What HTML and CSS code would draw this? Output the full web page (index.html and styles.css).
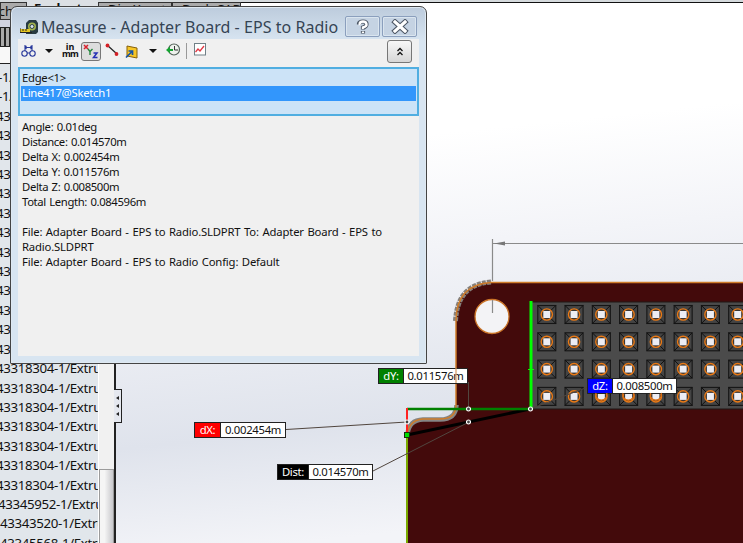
FILE: index.html
```html
<!DOCTYPE html>
<html lang="en">
<head>
<meta charset="utf-8">
<title>Measure - Adapter Board - EPS to Radio</title>
<link rel="stylesheet" href="styles.css">
</head>
<body>
<div class="desktop">
  <div class="tabs"><span class="tab first">Sketch</span><span class="tab active">Evaluate</span><span class="tab dim">DimXpert</span><span class="tab pcb">Dock CAD</span></div>
  <div class="workspace">
    <aside class="sidebar">
      <div class="tree-tools"><i></i><i></i></div>
      <div class="tree-body">
        <ul class="tree" id="tree"></ul>
        <div class="scroll"><div class="thumb"></div></div>
      </div>
    </aside>
    <main class="viewport"></main>
  </div>
  <svg class="model" width="743" height="543" viewBox="0 0 743 543">
    <defs>
      <g id="pin">
        <rect x="-9" y="-9" width="18" height="18" fill="#444" stroke="#151515" stroke-width="1.1"/>
        <path d="M-9-9 9 9M9-9-9 9" stroke="#101010" stroke-width="1"/>
        <circle r="5.6" fill="#3a3633" stroke="#ea7a16" stroke-width="1.4"/>
        <rect x="-3.5" y="-3.5" width="7" height="7" fill="#ededf3"/>
      </g>
      <g id="node"><circle r="2" fill="#444" stroke="#fff" stroke-width="1.2"/></g>
    </defs>
    <path d="M743 282.500H491Q457 283 456 321V405Q456 419 440 419H423Q409 420 407 435V543H743Z" fill="#430a0b"/>
    <path d="M455.500 321C457 297 467 284 491 282" fill="none" stroke="#85807c" stroke-width="5" stroke-dasharray="4 1"/>
    <path d="M456.500 405Q456 419.500 440 419.500H423Q409 420 407.500 434" fill="none" stroke="#858585" stroke-width="4.5"/>
    <path d="M743 282.500H491C467 284 456 297 456 321V405Q456 419 440 419H423Q409 420 407 435" fill="none" stroke="#cf7c2a" stroke-width="1.5"/>
    <circle cx="492" cy="316.500" r="17" fill="#f3f3f6" stroke="#cb7428" stroke-width="1.3"/>
    <path d="M492.500 239V281M492.500 300V313M493 243.500H743" stroke="#8a8a8a" stroke-width="1.2"/>
    <path d="M494 243.500 505 241.500V245.500Z" fill="#777"/>
    <rect x="530" y="302" width="214" height="107" fill="#4b4b4b"/><path d="M530 302H743M530 409H743" stroke="#211817"/>
    <g id="pins"></g>
    <path d="M531 301V409" stroke="#0f0" stroke-width="3"/><path d="M528 369.500H534" stroke="#0f0"/>
    <path d="M407 435 530 409" stroke="#000" stroke-width="3"/>
    <path d="M407 409H530" stroke="#008000" stroke-width="2.500"/>
    <path d="M407 408V435" stroke="#f22" stroke-width="2"/>
    <path d="M407 435V543" stroke="#7bab00" stroke-width="2"/>
    <path d="M286 429.500 407 422M373 471 469 422M468.500 382V409M530 409 588 387" fill="none" stroke="#51463f"/>
    <use href="#node" x="407" y="422"/><use href="#node" x="468.500" y="409"/><use href="#node" x="468.500" y="422"/><use href="#node" x="530.500" y="409"/>
    <rect x="404.500" y="432.500" width="5" height="5" fill="#0d0" stroke="#163008"/>
  </svg>
  <div class="callout dx"><b>dX:</b><span>0.002454m</span></div>
  <div class="callout dy"><b>dY:</b><span>0.011576m</span></div>
  <div class="callout dz"><b>dZ:</b><span>0.008500m</span></div>
  <div class="callout dist"><b>Dist:</b><span>0.014570m</span></div>
  <svg class="overlay" width="743" height="543" viewBox="0 0 743 543">
    <path d="M456 368V383" stroke="#d69a62" stroke-width="1.200"/>
    <g fill="none" stroke="#dc6e12" stroke-width="1.300"><path d="M596 393a5.600 5.600 0 1 0 10.700 0M623 393a5.600 5.600 0 1 0 10.700 0M650.500 393a5.600 5.600 0 1 0 10.700 0"/></g>
  </svg>
  <div class="splitter"><i></i><i></i><i></i></div>

  <section class="window">
    <header class="titlebar">
      <svg class="tape" width="18" height="15" viewBox="0 0 18 15"><path d="M6 3 9 0h7l2 3v9l-2 2H6Z" fill="#273b42"/><circle cx="12" cy="6.500" r="4" fill="#a1b34f"/><circle cx="12" cy="6.500" r="2" fill="#d8e5ec" stroke="#30424a"/><path d="M0 9h10v3H0Z" fill="#e2c520"/><path d="M0 8v5M3 9v2M6 9v2M0 12.500h12" stroke="#222"/></svg>
      <h1>Measure - Adapter Board - EPS to Radio</h1>
      <div class="caption-buttons">
        <button><svg width="14" height="16" viewBox="0 0 14 16"><path d="M3 5.500V4.500Q3.500 2.500 7 2.500t3.500 2.500T7 8.500V10.500M7 12v2.500" fill="none" stroke="#4b5563" stroke-width="4.200"/><path d="M2.500 5H3.500Q4 2.500 7 2.500t3.500 2.500T7 8.500V10M7 12.500v1.500" fill="none" stroke="#fff" stroke-width="2.400"/></svg></button>
        <button><svg width="18" height="15" viewBox="0 0 18 15"><path d="m4 3 10 9m0-9-10 9" stroke="#4b5563" stroke-width="5.200" stroke-linecap="square"/><path d="m4 3 10 9m0-9-10 9" stroke="#fff" stroke-width="3.200" stroke-linecap="square"/></svg></button>
      </div>
    </header>
    <div class="client">
      <div class="toolbar">
        <svg class="calipers" width="16" height="14" viewBox="0 0 16 14"><g fill="none" stroke="#29399b" stroke-width="1.100"><circle cx="3.500" cy="9.500" r="2.700"/><circle cx="11.500" cy="9.500" r="2.700"/><path d="M4 1v6M11 1v6M4 3.500h7M5.500 2 4 3.500 5.500 5M9.500 2 11 3.500 9.500 5M6 9h3"/></g></svg>
        <i class="arrow a1"></i>
        <div class="units"><span>in</span><span>mm</span></div>
        <div class="xyz"><svg width="18" height="17" viewBox="0 0 18 17"><path d="m2 2 4 4m0-4L2 6" stroke="#d9222d" stroke-width="1.500"/><path d="m6 6 2 2.500L10.500 6M8 8.500V12" fill="none" stroke="#23863b" stroke-width="1.400"/><path d="M11.500 10H15l-3.500 4.500h4" fill="none" stroke="#2630b5" stroke-width="1.500"/></svg></div>
        <svg class="point" width="14" height="14" viewBox="0 0 14 14"><path d="m2 2 10 9" stroke="#222" stroke-width="1.200"/><circle cx="2.500" cy="2.500" r="1.900" fill="#d32026"/><circle cx="11.500" cy="11" r="1.900" fill="#d32026"/></svg>
        <svg class="proj" width="14" height="14" viewBox="0 0 14 14"><path d="m2 1 10 2v10L2 11Z" fill="#f6c526" stroke="#86600b"/><path d="m1 12.500 6-6M3.500 6H7.500v4" fill="none" stroke="#1552a5" stroke-width="1.700"/></svg>
        <i class="arrow a2"></i>
        <svg class="history" width="15" height="14" viewBox="0 0 15 14"><circle cx="8" cy="6.500" r="5.500" fill="#eef2ed" stroke="#536159" stroke-width="1.200"/><path d="M8.500 3v4h3.500" fill="none" stroke="#333"/><path d="M1 7h6" stroke="#16a432" stroke-width="2"/><path d="M0 7 4 3.500v7Z" fill="#16a432"/></svg>
        <i class="sep"></i>
        <svg class="chart" width="12" height="13" viewBox="0 0 12 13"><rect x=".5" y=".5" width="11" height="11.500" fill="#fff" stroke="#708087"/><path d="m1.500 9 2.500-3 2 2 4-5" fill="none" stroke="#df3945" stroke-width="1.300"/></svg>
        <button class="collapse"><svg width="10" height="10" viewBox="0 0 10 10"><path d="m2.500 4 2.500-2.500L7.500 4M2.500 8 5 5.500 7.500 8" fill="none" stroke="#111" stroke-width="1.300"/></svg></button>
      </div>
      <div class="selection"><div>Edge&lt;1&gt;</div><div class="selected">Line417@Sketch1</div></div>
      <div class="results">
        <p>Angle: 0.01deg</p><p>Distance: 0.014570m</p><p>Delta X: 0.002454m</p><p>Delta Y: 0.011576m</p><p>Delta Z: 0.008500m</p><p>Total Length: 0.084596m</p>
        <p class="file">File: Adapter Board - EPS to Radio.SLDPRT To: Adapter Board - EPS to<br>Radio.SLDPRT</p><p class="config">File: Adapter Board - EPS to Radio Config: Default</p>
      </div>
    </div>
  </section>
</div>
<script src="script.js"></script>
</body>
</html>
```
FILE: styles.css
```css
*{box-sizing:border-box}
body{margin:0;overflow:hidden;font-family:"Noto Sans","Open Sans",sans-serif;color:#111}
.desktop{position:relative;width:743px;height:543px;display:flex;flex-direction:column;overflow:hidden}
.tabs{height:20px;flex:none;display:flex;background:linear-gradient(#d5dadd 0 2px,#111 2px 3px,#fff 3px);font-size:13px;line-height:20px;overflow:hidden}
.tab{display:block;white-space:nowrap;overflow:hidden;flex:none;border:1px solid #333;background:#aaa}
.tab.first{width:27px;display:flex;justify-content:flex-end;padding-right:13px;line-height:17px;margin-top:2px}
.tab.active{width:71px;background:#dce0e4;border:0;padding-left:7px;line-height:17px;font-weight:700}
.tab.dim{width:74px;padding-left:9px;margin-top:2px;line-height:12px}
.tab.pcb{width:69px;padding-left:9px;margin-top:2px;line-height:12px}
.workspace{display:flex;flex:1;min-height:0}
.sidebar{width:116px;background:#e1e6eb;border-right:2px solid #222;display:flex;flex-direction:column;flex:none}
.tree-tools{height:44px;flex:none;background:linear-gradient(#d1d3e0 0 7px,#aaa 7px 27px,#f8f8f8 27px 43px,#222 43px);display:flex;padding-top:7px}
.tree-tools i{width:5px;height:20px;border:1px solid #222;background:#aaa}
.tree-body{display:flex;flex:1;min-height:0}
.tree{width:98px;list-style:none;margin:0;padding:4px 0 0;font-size:13.300px;line-height:19.420px;overflow:hidden;white-space:nowrap;letter-spacing:-.35px}
.tree li{height:19.420px;text-indent:-4px}
.tree .near{text-indent:-2px}
.tree .inset{text-indent:0}
.scroll{width:16px;background:#f1f1f1;border-left:1px solid #fff;padding-top:405px}
.thumb{height:90px;border:1px solid #9b9b9b;background:linear-gradient(90deg,#f5f5f5 35%,#c8c8cc)}
.viewport{flex:1;background:linear-gradient(174deg,#fff 25%,#f3f4f8 44%,#dfe3ec 73%,#f3f4f8 92%)}
.model,.overlay{position:absolute;left:0;top:0}
.callout{position:absolute;display:flex;height:16px;border:1px solid #222;background:#fff;font-size:11.300px;line-height:14px;white-space:nowrap;letter-spacing:-.3px}
.callout b{font-weight:400;color:#fff;text-align:center;border-right:1px solid #222}
.callout span{flex:1;text-align:center}
.dx{left:194px;top:422px;width:92px}.dx b{width:26px;background:#f00}
.dy{left:378px;top:368px;width:90px}.dy b{width:25px;background:#008000}
.dz{left:587px;top:378px;width:90px}.dz b{width:25px;background:#00f}
.dist{left:277px;top:464px;width:96px}.dist b{width:31px;background:#000}
.splitter{position:absolute;left:114px;top:389px;width:8px;height:34px;border:1px solid #222;border-left:0;background:#e5e8ef;display:flex;flex-direction:column;align-items:center;padding-top:6px;gap:4px}
.splitter i{border:2px solid transparent;border-right:3px solid #222;border-left:0}
.window{position:absolute;left:10px;top:6px;width:417px;height:358px;padding:0 7px 7px;border:1px solid #444;border-radius:7px 7px 1px 1px;background:linear-gradient(#bccbdc,#d8e5f1 34px);box-shadow:inset 0 0 0 1px #dfe9f2}
.titlebar{display:flex;height:32px;align-items:flex-start}
.tape{margin:13px 0 0 2px;flex:none}
h1{font-size:16px;line-height:24px;font-weight:400;color:#354454;margin:8px 0 0 3px;width:300px;white-space:nowrap;letter-spacing:.04px}
.caption-buttons{display:flex;gap:2px;margin:9px 0 0 4px}
.caption-buttons button{width:35px;height:21px;padding:0;border:1px solid #8b9fbd;border-radius:2px;background:#c5d3e3;box-shadow:inset 0 0 0 1px #dae5ef;display:grid;place-items:center;flex:none}
.client{height:317px;background:#f0f0f0}
.toolbar{height:28px;display:flex;align-items:flex-start;padding:3px 0 0 3px}
.toolbar>*{flex:none}
.calipers{margin-top:2px}
.arrow{border:4px solid transparent;border-top-color:#111;border-bottom:0;margin:7px 0 0 8px}
.units{width:16px;margin:1px 0 0 9px;text-align:center;font-weight:700;font-size:9px;line-height:7px}
.units span{display:block;letter-spacing:-.9px}
.units span:first-child{letter-spacing:0}
.xyz{width:20px;height:19px;border:1px solid #777;border-radius:3px;background:#ddd;margin-left:3px}
.point{margin:1px 0 0 4px}.proj{margin:3px 0 0 6px}.arrow.a2{margin-left:10px}.history{margin:1px 0 0 9px}
.sep{width:1px;height:16px;background:#999;margin:1px 0 0 5px}.chart{margin:1px 0 0 7px}
.collapse{width:25px;height:23px;margin:-2px 7px 0 auto;padding:0;border:1px solid #777;border-radius:3px;background:linear-gradient(#f7f7f7,#d6d6d6);display:grid;place-items:center}
.selection{height:49px;border:2px solid #50aee1;background:#cce3f7;padding:2px 1px 0;font-size:11.300px;line-height:15px;letter-spacing:-.28px}
.selection div{padding-left:1px;line-height:14px;height:15px}.selection .selected{background:#3296fc;color:#fff}
.results{padding:3px 4px;font-size:11.300px;line-height:15px;white-space:nowrap;letter-spacing:-.36px;word-spacing:.8px}
.results p{margin:0}.results .file{margin-top:15px;letter-spacing:-.17px}.results .config{letter-spacing:-.17px}
```
FILE: script.js
```js
const tree = document.getElementById("tree");
const tail = ["43345952-1/Extru", "43343520-1/Extru", "43345568-1/Extru"];
for (let i = 0; i < 25; i++) {
  const item = document.createElement("li");
  item.textContent = i < 2 ? "-1/Extru" : i >= 22 ? tail[i - 22] : "43318304-1/Extru";
  if (i < 2 || i === 22) item.className = "near";
  if (i > 22) item.className = "inset";
  tree.append(item);
}
const pins = document.getElementById("pins");
for (let row = 0; row < 4; row++) {
  for (let col = 0; col < 8; col++) {
    const pin = document.createElementNS("http://www.w3.org/2000/svg", "use");
    pin.setAttribute("href", "#pin");
    pin.setAttribute("x", 546.8 + col * 27.27);
    pin.setAttribute("y", 314.5 + row * 27.3);
    pins.append(pin);
  }
}
```
